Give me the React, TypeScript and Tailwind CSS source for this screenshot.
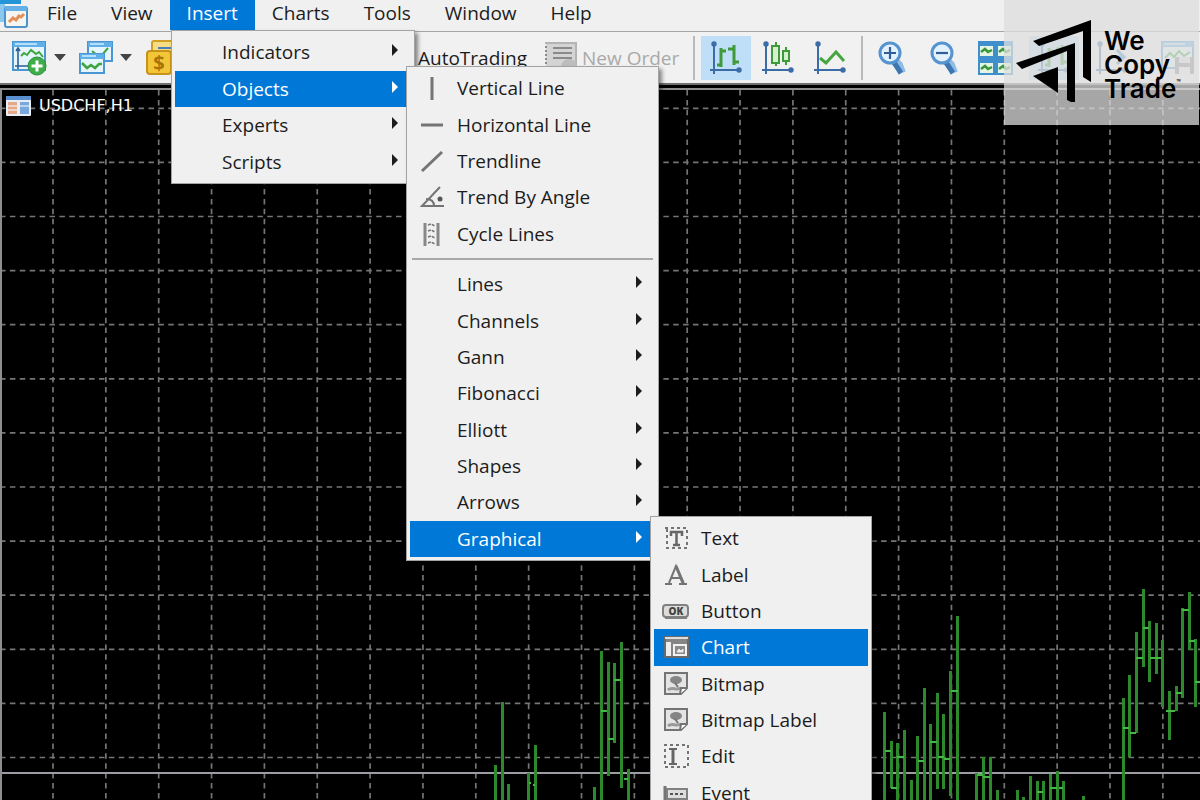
import React from "react";
import { cva } from "class-variance-authority";
import clsx from "clsx";

interface MenuEntry {
  label: string;
  icon?: React.ReactNode;
  submenu?: boolean;
  active?: boolean;
}

const MENUS = ["File", "View", "Insert", "Charts", "Tools", "Window", "Help"];

/* ---------- toolbar icons ---------- */

const MiniWindow = ({ x, y, w, h }: { x: number; y: number; w: number; h: number }) => (
  <g>
    <rect x={x + 1} y={y + 1} width={w - 2} height={h - 2} fill="#e6f5fb" stroke="#4a96d2" strokeWidth="2" />
    <rect x={x + 1} y={y + 1} width={w - 2} height="5" fill="#5fb0e8" />
    <rect x={x + 3} y={y + 2} width={w - 12} height="2" fill="#b5defa" />
  </g>
);

const AppIcon = () => (
  <svg width="30" height="30" viewBox="0 0 30 30" aria-hidden="true">
    <rect x="0" y="0" width="21" height="4" fill="#2496d8" />
    <rect x="0" y="4" width="5" height="18" fill="#8cc8ee" />
    <rect x="5" y="7" width="22" height="20" rx="2" fill="#f4f4f0" stroke="#4c93cc" strokeWidth="2" />
    <rect x="5" y="6" width="22" height="5" fill="#65b1e6" />
    <path d="M9 22l4-4 3 2 3-4 2 1 3-3" fill="none" stroke="#e39058" strokeWidth="3" />
  </svg>
);

const NewChartIcon = () => (
  <svg width="36" height="36" viewBox="0 0 36 36" aria-hidden="true">
    <MiniWindow x={0} y={1} w={34} h={30} />
    <path d="M6 9v20M4 11l2-3 2 3M3 26h16" fill="none" stroke="#2c5f94" strokeWidth="1.6" />
    <path d="M9 16l3-3 3 2 4-5 5 4 3-2 4 5" fill="none" stroke="#3fa63f" strokeWidth="2" />
    <circle cx="25" cy="26" r="9" fill="#3fae49" stroke="#279238" />
    <path d="M25 20.500v11M19.500 26h11" stroke="#fff" strokeWidth="3" />
  </svg>
);

const ProfilesIcon = () => (
  <svg width="36" height="36" viewBox="0 0 36 36" aria-hidden="true">
    <MiniWindow x={9} y={1} w={26} h={21} />
    <path d="M14 11l6 5 4-1 6-7" fill="none" stroke="#3fa63f" strokeWidth="2" />
    <MiniWindow x={1} y={13} w={26} h={21} />
    <path d="M4 23l5 5 4-3 4 3 4-4h3" fill="none" stroke="#3fa63f" strokeWidth="2.500" />
  </svg>
);

const SymbolsIcon = () => (
  <svg width="36" height="36" viewBox="0 0 36 36" aria-hidden="true">
    <rect x="6" y="1" width="28" height="22" rx="2" fill="#f7dc83" stroke="#d0a024" strokeWidth="2" />
    <path d="M12 8h20" stroke="#4a7fb8" strokeWidth="2" />
    <rect x="1" y="11" width="24" height="23" rx="3" fill="#f3c638" stroke="#c6931b" strokeWidth="2" />
    <text x="13" y="30" textAnchor="middle" fontSize="20" fontWeight="700" fontFamily="Open Sans, sans-serif" fill="#a87406">
      $
    </text>
  </svg>
);

const NewOrderIcon = () => (
  <svg width="34" height="34" viewBox="0 0 34 34" aria-hidden="true">
    <rect x="2" y="1" width="30" height="25" fill="#d4d4d4" />
    <path d="M2 1v25" stroke="#8a8a8a" strokeWidth="2" strokeDasharray="2 2" />
    <path d="M1 2h31v24" fill="none" stroke="#b4b4b4" strokeWidth="2" />
    <path d="M9 7h19M9 12h19M9 17h19" stroke="#8a8a8a" strokeWidth="2" />
    <circle cx="25" cy="26" r="8" fill="#bdbdbd" />
  </svg>
);

const Axes = () => (
  <g>
    <path d="M5 3v32M1 31h30" stroke="#3b6ca6" strokeWidth="2" fill="none" />
    <circle cx="5" cy="5" r="2.700" fill="#3b6ca6" />
    <circle cx="30" cy="31" r="2.700" fill="#3b6ca6" />
  </g>
);

const BarsIcon = () => (
  <svg width="34" height="38" viewBox="0 0 34 38" aria-hidden="true">
    <Axes />
    <path d="M12 9v19M8 26h4M12 12h5M25 6v20M19 10h6M25 23h5" fill="none" stroke="#3f9a3a" strokeWidth="3" />
  </svg>
);

const CandlesIcon = () => (
  <svg width="34" height="38" viewBox="0 0 34 38" aria-hidden="true">
    <Axes />
    <path d="M15 3v4M15 24v3M25 8v4M25 22v4" stroke="#3f9a3a" strokeWidth="2" />
    <rect x="11" y="7" width="7" height="17" fill="#d5f0cf" stroke="#3f9a3a" strokeWidth="2" />
    <rect x="22" y="12" width="6" height="10" fill="#d5f0cf" stroke="#3f9a3a" strokeWidth="2" />
  </svg>
);

const LineIcon = () => (
  <svg width="34" height="38" viewBox="0 0 34 38" aria-hidden="true">
    <Axes />
    <path d="M7 19l6 5 10-11 8 9" fill="none" stroke="#47a540" strokeWidth="3" />
  </svg>
);

const MagnifierIcon = ({ plus }: { plus?: boolean }) => (
  <svg width="28" height="36" viewBox="0 0 28 36" aria-hidden="true">
    <path d="M17 21l4 4 3 8" stroke="#8dbce4" strokeWidth="8" fill="none" />
    <path d="M15 21l8 12" stroke="#3d76b0" strokeWidth="5" fill="none" />
    <circle cx="12" cy="13" r="10" fill="#e2f1fb" stroke="#5594cf" strokeWidth="3" />
    <path d={plus ? "M6 13h12M12 7v12" : "M6 13h12"} stroke="#2f5f96" strokeWidth="2.200" />
  </svg>
);

const TileIcon = () => (
  <svg width="36" height="36" viewBox="0 0 36 36" aria-hidden="true">
    <rect x="0" y="1" width="35" height="34" fill="#3f8fcd" />
    {[
      [2, 6],
      [20, 6],
      [2, 23],
      [20, 23],
    ].map(([x, y]) => (
      <g key={`${x}-${y}`}>
        <rect x={x} y={y} width="13" height="10" fill="#e4f5e4" />
        <path d={`M${x + 1} ${y + 6}l4-3 3 3 4-2`} fill="none" stroke="#37983a" strokeWidth="2.500" />
      </g>
    ))}
  </svg>
);

const ShiftIcon = () => (
  <svg width="34" height="38" viewBox="0 0 34 38" aria-hidden="true">
    <Axes />
    <path d="M15 18h14M22 11l7 7-7 7" fill="none" stroke="#4a8ecb" strokeWidth="3" />
  </svg>
);

const TemplateIcon = () => (
  <svg width="36" height="36" viewBox="0 0 36 36" aria-hidden="true">
    <MiniWindow x={1} y={1} w={33} h={28} />
    <path d="M5 18l5-5 4 4 5-6 5 5 6-4" fill="none" stroke="#3fa63f" strokeWidth="2" />
    <rect x="15" y="17" width="19" height="17" rx="1" fill="#888" />
    <rect x="19" y="17" width="11" height="6" fill="#ddd" />
    <rect x="19" y="27" width="11" height="7" fill="#eee" />
  </svg>
);

/* ---------- menu icons ---------- */

const Glyph = ({ children }: { children: React.ReactNode }) => (
  <svg width="28" height="28" viewBox="0 0 28 28" fill="none" stroke="#747474" strokeWidth="2" aria-hidden="true">
    {children}
  </svg>
);

const BitmapGlyph = () => (
  <Glyph>
    <path d="M3 3h22v15l-6 6H3z" fill="#e4e4e4" />
    <ellipse cx="14" cy="10" rx="6" ry="4" fill="#858585" stroke="none" />
    <path d="M13 13l3 4" />
    <path d="M6 20c4-4 8 1 13-2" strokeWidth="3" stroke="#999" />
    <path d="M18 24l1-6 6 0" fill="#fff" />
  </Glyph>
);

const OBJECT_TOOLS: MenuEntry[] = [
  { label: "Vertical Line", icon: <Glyph><path d="M14 3v23" strokeWidth="3" /></Glyph> },
  { label: "Horizontal Line", icon: <Glyph><path d="M3 14h22" strokeWidth="3" /></Glyph> },
  { label: "Trendline", icon: <Glyph><path d="M4 24L24 5" strokeWidth="3" /></Glyph> },
  {
    label: "Trend By Angle",
    icon: (
      <Glyph>
        <path d="M22 4L4 23h22M8 16c6 0 8 3 8 7" />
        <circle cx="22" cy="16" r="2.500" fill="#555" stroke="none" />
      </Glyph>
    ),
  },
  {
    label: "Cycle Lines",
    icon: (
      <Glyph>
        <path d="M7 3v23M20 3v23" strokeWidth="3" stroke="#888" />
        <path d="M10 5l3-1 4 2M10 11l3-1 4 2M10 17l3-1 4 2M10 23l3-1 4 2" strokeWidth="1.500" strokeDasharray="3 1" />
      </Glyph>
    ),
  },
];

const OBJECT_GROUPS: MenuEntry[] = [
  { label: "Lines", submenu: true },
  { label: "Channels", submenu: true },
  { label: "Gann", submenu: true },
  { label: "Fibonacci", submenu: true },
  { label: "Elliott", submenu: true },
  { label: "Shapes", submenu: true },
  { label: "Arrows", submenu: true },
  { label: "Graphical", submenu: true, active: true },
];

const INSERT_ITEMS: MenuEntry[] = [
  { label: "Indicators", submenu: true },
  { label: "Objects", submenu: true, active: true },
  { label: "Experts", submenu: true },
  { label: "Scripts", submenu: true },
];

const GRAPHICAL_ITEMS: MenuEntry[] = [
  {
    label: "Text",
    icon: (
      <Glyph>
        <path d="M3 4h22v20H5V4" strokeDasharray="3 3" />
        <path d="M9 12V8h11v4M14.500 8v13M11 21h7" strokeWidth="2.500" stroke="#666" />
      </Glyph>
    ),
  },
  {
    label: "Label",
    icon: (
      <Glyph>
        <path d="M3 23h7M17 23h8M7 22l7-17 8 18M9 17h9" strokeWidth="2" />
        <path d="M14 5l7 17" strokeWidth="3" />
      </Glyph>
    ),
  },
  {
    label: "Button",
    icon: (
      <Glyph>
        <rect x="1" y="8" width="25" height="12" rx="3" fill="#ddd" stroke="#808080" />
        <path d="M3 21h22" stroke="#808080" />
        <text x="14" y="18" textAnchor="middle" fontSize="10" fontWeight="800" fontFamily="Open Sans, sans-serif" fill="#444" stroke="none">
          OK
        </text>
      </Glyph>
    ),
  },
  {
    label: "Chart",
    active: true,
    icon: (
      <Glyph>
        <rect x="3" y="4" width="23" height="20" fill="#858585" stroke="#6a6a6a" />
        <path d="M3 5h23" stroke="#ddd" />
        <rect x="4" y="9" width="5" height="14" fill="#eee" stroke="none" />
        <rect x="12" y="12" width="12" height="10" fill="#8a8a8a" stroke="#f2f2f2" />
        <path d="M15 19l2-3 2 2 2-2v3z" fill="#eee" stroke="#eee" strokeWidth="1" />
      </Glyph>
    ),
  },
  { label: "Bitmap", icon: <BitmapGlyph /> },
  { label: "Bitmap Label", icon: <BitmapGlyph /> },
  {
    label: "Edit",
    icon: (
      <Glyph>
        <path d="M2 3h24v22H3V3" strokeDasharray="3 3" />
        <path d="M11 7v15M7 7h8M7 22h8" stroke="#666" />
        <path d="M11 7v15" strokeWidth="3" stroke="#666" />
      </Glyph>
    ),
  },
  {
    label: "Event",
    icon: (
      <Glyph>
        <path d="M3 7v14" strokeWidth="3" />
        <rect x="5" y="10" width="20" height="10" fill="#ddd" stroke="#808080" />
        <path d="M8 15h15" strokeDasharray="3 2" stroke="#555" />
      </Glyph>
    ),
  },
];

/* ---------- menus ---------- */

const menuItem = cva("flex w-full items-center text-left", {
  variants: {
    active: {
      true: "bg-[#0078d7] text-white",
      false: "text-[#1c1c1c] hover:bg-[#dbe9f5]",
    },
  },
});

const Arrow = () => (
  <svg width="8" height="18" viewBox="0 0 8 18" fill="currentColor" aria-hidden="true">
    <path d="M1 1l6 6-6 6z" />
  </svg>
);

const MenuItems = ({ items, className }: { items: MenuEntry[]; className: string }) => (
  <div className={clsx("grid auto-rows-fr", className)}>
    {items.map((item) => (
      <button key={item.label} type="button" role="menuitem" className={menuItem({ active: !!item.active })}>
        <span className="flex w-[47px] shrink-0 pl-2">{item.icon}</span>
        <span className="flex-1 whitespace-nowrap">{item.label}</span>
        {item.submenu && (
          <span className="pr-3">
            <Arrow />
          </span>
        )}
      </button>
    ))}
  </div>
);

const MENU_PANEL =
  "absolute border border-[#a3a3a3] bg-[#f0f0f0] p-[3px] shadow-[3px_3px_4px_rgba(0,0,0,0.45)]";

/* ---------- chart ---------- */

const GRID_X = Array.from({ length: 22 }, (_, i) => 53 + i * 52.85);
const GRID_Y = Array.from({ length: 13 }, (_, i) => 108.3 + i * 54.1);

// [x, high, low]
const BARS = [
  [495, 765, 800], [502, 702, 800], [508, 784, 800], [528, 773, 800], [535, 745, 800],
  [594, 787, 800], [601, 651, 800], [608, 662, 776], [614, 663, 743], [621, 642, 788], [628, 769, 800],
  [884, 712, 800], [891, 741, 788], [897, 743, 800], [904, 730, 800], [911, 780, 800], [917, 736, 800],
  [924, 688, 800], [930, 724, 800], [937, 693, 789], [943, 714, 789], [950, 671, 796], [957, 616, 800],
  [976, 773, 800], [983, 757, 800], [990, 757, 800], [997, 790, 800], [1017, 790, 800], [1023, 797, 800],
  [1030, 776, 800], [1037, 781, 800], [1043, 781, 800], [1050, 774, 800], [1057, 771, 800], [1063, 781, 800],
  [1083, 796, 800], [1123, 698, 800], [1129, 675, 757], [1136, 632, 733], [1143, 589, 667], [1149, 621, 682],
  [1156, 623, 674], [1162, 640, 707], [1169, 691, 740], [1176, 686, 711], [1182, 608, 698], [1189, 592, 650],
  [1195, 639, 707],
];

// [x1, x2, y]
const TICKS = [
  [601, 607, 711], [608, 614, 739], [614, 621, 680], [624, 628, 779], [529, 531, 783], [533, 535, 785],
  [885, 891, 751], [891, 897, 788], [897, 904, 757], [918, 924, 761], [930, 937, 742], [938, 944, 757],
  [944, 950, 759], [951, 958, 691], [977, 983, 775], [983, 990, 777], [1037, 1043, 792], [1050, 1057, 788],
  [1059, 1063, 788], [1123, 1129, 728], [1130, 1136, 733], [1136, 1143, 658], [1143, 1149, 628],
  [1150, 1162, 658], [1166, 1175, 711], [1176, 1182, 693], [1182, 1189, 610], [1189, 1195, 641],
  [1195, 1200, 682],
];

const PriceChart = () => (
  <svg className="absolute inset-0 size-full" viewBox="2 90 1198 710" preserveAspectRatio="xMinYMin slice" aria-hidden="true">
    <g stroke="#757575" strokeWidth="1.700" strokeDasharray="5.500 4.400">
      {GRID_X.map((x) => (
        <path key={x} d={`M${x} 90V800`} />
      ))}
      {GRID_Y.map((y) => (
        <path key={y} d={`M0 ${y}H1200`} />
      ))}
    </g>
    <path d="M0 773H1200" stroke="#9c9ca4" strokeWidth="2" />
    <g stroke="#2c8a2c" strokeWidth="3">
      {BARS.map(([x, high, low]) => (
        <path key={x} d={`M${x + 0.5} ${high}V${low}`} />
      ))}
    </g>
    <g stroke="#43b843" strokeWidth="2">
      {TICKS.map(([x1, x2, y]) => (
        <path key={`${x1}-${y}`} d={`M${x1} ${y}H${x2}`} />
      ))}
    </g>
  </svg>
);

const Divider = () => <span className="h-11 w-[2px] shrink-0 bg-[#b9b9b9]" />;

const Caret = () => (
  <svg width="12" height="7" viewBox="0 0 12 7" aria-hidden="true">
    <path d="M0 0h12L6 7z" fill="#444" />
  </svg>
);

const TOOL = "flex h-11 w-[50px] shrink-0 items-center justify-center border border-transparent";

const Brand = () => (
  <div className="absolute top-0 right-px flex h-[125px] w-[195px] bg-[#dedede]/75 text-black">
    <svg className="mt-5 ml-3 shrink-0" width="76" height="83" viewBox="0 0 76 83" aria-hidden="true">
      <path d="M17 21L75 0v62l-8-5V11L23 26z" />
      <path d="M0 43l59-20v59h-4l-4-2V31L6 49z" />
      <path d="M17 56l25-9v26z" />
    </svg>
    <div className="mt-[29px] ml-3 font-['Inter',sans-serif] text-[26px] leading-6 font-semibold">
      <p>We</p>
      <p>Copy</p>
      <p className="flex items-start">
        Trade<span className="text-[7px] leading-3">™</span>
      </p>
    </div>
  </div>
);

const App = () => {
  return (
    <div className="relative flex h-screen flex-col overflow-hidden bg-black font-['Open_Sans','Noto_Sans',sans-serif] text-[19px] leading-6 text-[#1c1c1c]">
      <nav className="flex h-8 shrink-0 items-start border-b border-[#a5a5a5] bg-[#f0f0f0]">
        <AppIcon />
        {MENUS.map((name) => (
          <button
            key={name}
            type="button"
            className={clsx("h-[30px] px-[17px] pb-1", name === "Insert" && "bg-[#0078d7] text-white")}
          >
            {name}
          </button>
        ))}
      </nav>

      <div className="flex h-[51px] shrink-0 items-center bg-[#f1f1f1] pl-3">
        <button type="button" aria-label="New chart" className="flex items-center gap-[6px]">
          <NewChartIcon />
          <Caret />
        </button>
        <button type="button" aria-label="Profiles" className="ml-3 flex items-center gap-[6px]">
          <ProfilesIcon />
          <Caret />
        </button>
        <button type="button" aria-label="Symbols" className="ml-[14px]">
          <SymbolsIcon />
        </button>
        <button type="button" className="ml-[236px] w-[106px] shrink-0 whitespace-nowrap">
          AutoTrading
        </button>
        <button type="button" className="ml-5 flex w-[137px] shrink-0 items-center gap-1 whitespace-nowrap text-[#a9a9a9]">
          <NewOrderIcon />
          New Order
        </button>
        <span className="w-3 shrink-0" />
        <Divider />
        <div className="ml-[6px] flex gap-[2px]">
          <button type="button" aria-label="Bar chart" className={clsx(TOOL, "border-[#a6d0f2] bg-[#bfdff8]")}>
            <BarsIcon />
          </button>
          <button type="button" aria-label="Candlesticks" className={TOOL}>
            <CandlesIcon />
          </button>
          <button type="button" aria-label="Line chart" className={TOOL}>
            <LineIcon />
          </button>
        </div>
        <span className="w-[6px] shrink-0" />
        <Divider />
        <div className="ml-1 flex gap-[2px]">
          <button type="button" aria-label="Zoom in" className={TOOL}>
            <MagnifierIcon plus />
          </button>
          <button type="button" aria-label="Zoom out" className={TOOL}>
            <MagnifierIcon />
          </button>
          <button type="button" aria-label="Tile windows" className={TOOL}>
            <TileIcon />
          </button>
        </div>
        <button type="button" aria-label="Auto scroll" className={clsx(TOOL, "ml-2 border-[#a6d0f2] bg-[#bfdff8]")}>
          <BarsIcon />
        </button>
        <button type="button" aria-label="Chart shift" className={clsx(TOOL, "ml-2")}>
          <ShiftIcon />
        </button>
        <button type="button" aria-label="Templates" className="ml-auto shrink-0 pr-1">
          <TemplateIcon />
        </button>
      </div>

      <main className="flex flex-1 flex-col border-t-2 border-[#6f6f6f] pt-[3px]">
        <div className="relative flex-1 border-t-2 border-l-2 border-[#8e8e8e]">
          <PriceChart />
          <div className="relative flex items-center gap-2 pt-1 pl-1 font-['DejaVu_Sans',sans-serif] text-base text-white">
            <svg width="25" height="20" viewBox="0 0 25 20" aria-hidden="true">
              <rect width="25" height="20" rx="1" fill="#e8eef6" />
              <rect width="25" height="4" fill="#5a8fd0" />
              <rect x="2" y="6" width="9" height="12" fill="#e3a98a" />
              <rect x="14" y="6" width="9" height="12" fill="#7aa7dc" />
              <path d="M2 10h9M2 14h9M14 10h9" stroke="#fff" />
            </svg>
            <h1>USDCHF,H1</h1>
          </div>
        </div>
      </main>

      <div role="menu" aria-label="Insert" className={clsx(MENU_PANEL, "top-[30px] left-[171px] w-[244px]")}>
        <MenuItems items={INSERT_ITEMS} className="h-[146px]" />
      </div>

      <div role="menu" aria-label="Objects" className={clsx(MENU_PANEL, "top-[66px] left-[406px] w-[253px]")}>
        <MenuItems items={OBJECT_TOOLS} className="h-[182px]" />
        <hr className="mx-[2px] my-[6px] border-t-2 border-[#a8a8a8]" />
        <MenuItems items={OBJECT_GROUPS} className="h-[291px]" />
      </div>

      <div role="menu" aria-label="Graphical" className={clsx(MENU_PANEL, "top-[516px] left-[650px] w-[222px]")}>
        <MenuItems items={GRAPHICAL_ITEMS} className="h-[291px]" />
      </div>

      <Brand />
    </div>
  );
};

export default App;
